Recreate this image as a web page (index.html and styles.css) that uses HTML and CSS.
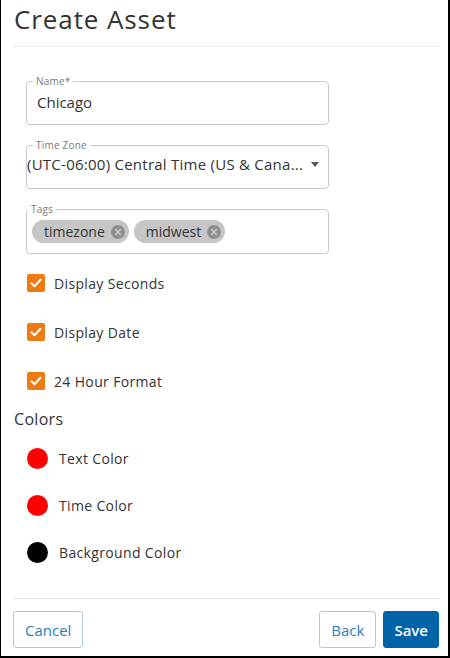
FILE: index.html
```
<!DOCTYPE html>
<html>
<head>
<meta charset="utf-8">
<link rel="stylesheet" href="styles.css">
</head>
<body>
<div class="dialog">
  <div class="header"><h1 class="title">Create Asset</h1></div>
  <div class="body">
    <fieldset class="field">
      <legend>Name*</legend>
      <div class="value">Chicago</div>
    </fieldset>
    <fieldset class="field">
      <legend>Time Zone</legend>
      <div class="value select">
        <span class="sel-text">(UTC-06:00) Central Time (US &amp; Cana...</span>
        <span class="caret"></span>
      </div>
    </fieldset>
    <fieldset class="field tags">
      <legend>Tags</legend>
      <div class="chips">
        <span class="chip">timezone<span class="chip-x"><svg viewBox="0 0 14 14" width="14" height="14"><circle cx="7" cy="7" r="7" fill="#8f8f8f"/><path d="M4.6 4.6l4.8 4.8M9.4 4.6l-4.8 4.8" stroke="#c9c9c9" stroke-width="1.6" stroke-linecap="round"/></svg></span></span>
        <span class="chip">midwest<span class="chip-x"><svg viewBox="0 0 14 14" width="14" height="14"><circle cx="7" cy="7" r="7" fill="#8f8f8f"/><path d="M4.6 4.6l4.8 4.8M9.4 4.6l-4.8 4.8" stroke="#c9c9c9" stroke-width="1.6" stroke-linecap="round"/></svg></span></span>
      </div>
    </fieldset>
    <div class="checks">
      <div class="check"><span class="box"><svg viewBox="0 0 18 18" width="18" height="18"><path d="M4.5 9.2l3 3 6-6.4" fill="none" stroke="#fff" stroke-width="2" stroke-linecap="round" stroke-linejoin="round"/></svg></span><span class="check-label">Display Seconds</span></div>
      <div class="check"><span class="box"><svg viewBox="0 0 18 18" width="18" height="18"><path d="M4.5 9.2l3 3 6-6.4" fill="none" stroke="#fff" stroke-width="2" stroke-linecap="round" stroke-linejoin="round"/></svg></span><span class="check-label">Display Date</span></div>
      <div class="check"><span class="box"><svg viewBox="0 0 18 18" width="18" height="18"><path d="M4.5 9.2l3 3 6-6.4" fill="none" stroke="#fff" stroke-width="2" stroke-linecap="round" stroke-linejoin="round"/></svg></span><span class="check-label">24 Hour Format</span></div>
    </div>
    <div class="section-title">Colors</div>
    <div class="colors">
      <div class="color-row"><span class="dot red"></span><span class="color-label">Text Color</span></div>
      <div class="color-row"><span class="dot red"></span><span class="color-label">Time Color</span></div>
      <div class="color-row"><span class="dot black"></span><span class="color-label">Background Color</span></div>
    </div>
  </div>
  <div class="footer">
    <button class="btn outline">Cancel</button>
    <div class="spacer"></div>
    <button class="btn outline">Back</button>
    <button class="btn primary">Save</button>
  </div>
</div>
</body>
</html>
```
FILE: styles.css
```
* { box-sizing: border-box; }
html, body { margin: 0; padding: 0; background: #fff; }
body { font-family: "Open Sans", "Liberation Sans", sans-serif; color: #333; }
.dialog {
  width: 450px;
  height: 658px;
  border-left: 1px solid #000;
  border-right: 2px solid #000;
  border-bottom: 2px solid #000;
  display: flex;
  flex-direction: column;
}
.header {
  margin: 0 8px 0 12px;
  height: 47px;
  border-bottom: 1px solid #e8e8e8;
  padding-top: 3px;
}
.title {
  margin: 0;
  font-size: 26px;
  font-weight: 400;
  line-height: 32px;
  letter-spacing: 0.9px;
  color: #333;
  padding-left: 1px;
}
.body {
  flex: 1;
  padding: 28px 0 0 12px;
}
.field {
  width: 303px;
  margin: 0 0 14px 13px;
  padding: 0 10px 12px 10px;
  border: 1px solid #c9c9c9;
  border-radius: 4px;
}
.field legend {
  font-size: 10px;
  line-height: 12px;
  color: #7a7a7a;
  padding: 0 3px;
  margin-left: -4px;
  letter-spacing: 0.2px;
}
.value {
  margin-top: 5px;
  font-size: 15px;
  line-height: 20px;
  color: #333;
  white-space: nowrap;
}
.select { display: flex; align-items: center; justify-content: space-between; margin-left: -10px; margin-top: 3px; margin-bottom: 2px; }
.sel-text { letter-spacing: 0.25px; }
.caret {
  width: 0; height: 0;
  border-left: 4.5px solid transparent;
  border-right: 4.5px solid transparent;
  border-top: 5px solid #555;
  margin-right: -1px;
}
.tags { margin-top: 2px; padding-left: 5px; padding-bottom: 10px; }
.chips { display: flex; gap: 5px; margin-top: 5px; }
.chip {
  display: inline-flex;
  align-items: center;
  height: 23px;
  padding: 0 4px 0 12px;
  background: #c6c6c6;
  border-radius: 12px;
  font-size: 14px;
  color: #333;
  gap: 6px;
}
.chip-x { display: flex; }
.checks { display: flex; flex-direction: column; gap: 31px; margin: 20px 0 0 14px; }
.check { display: flex; align-items: center; height: 18px; }
.box {
  width: 18px; height: 18px;
  background: #ec7b12;
  border-radius: 2px;
  display: flex;
}
.check-label { margin-left: 9px; font-size: 14px; color: #333; letter-spacing: 0.35px; }
.section-title {
  margin: 19px 0 0 1px;
  font-size: 16px;
  line-height: 20px;
  color: #333;
  letter-spacing: 0.3px;
}
.colors { display: flex; flex-direction: column; gap: 26px; margin: 19px 0 0 14px; }
.color-row { display: flex; align-items: center; height: 21px; }
.dot { width: 21px; height: 21px; border-radius: 50%; }
.red { background: #ff0000; }
.black { background: #000; }
.color-label { margin-left: 11px; font-size: 14px; color: #333; letter-spacing: 0.35px; }
.footer {
  margin: 0 8px 8px 12px;
  border-top: 1px solid #e2e2e2;
  padding-top: 12px;
  padding-right: 1px;
  display: flex;
  gap: 7px;
}
.spacer { flex: 1; }
.btn {
  height: 37px;
  padding: 0 11px;
  font-family: "Open Sans", "Liberation Sans", sans-serif;
  font-size: 15px;
  border-radius: 3px;
  cursor: pointer;
}
.outline { background: #fff; border: 1px solid #a9cbe4; color: #2c7dbd; }
.primary { background: #0063a8; border: 1px solid #0063a8; color: #fff; font-weight: 600; padding: 0 10px; }
```
